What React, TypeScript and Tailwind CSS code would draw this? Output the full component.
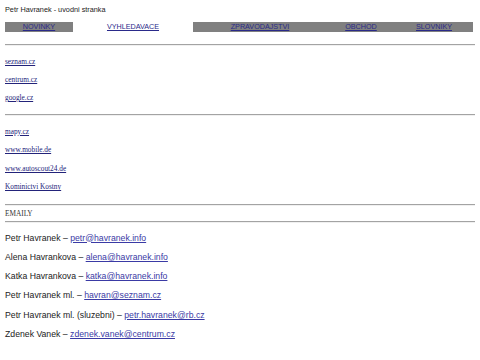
const navItems = [
  { label: "NOVINKY", w: "w-[68px]", active: false },
  { label: "VYHLEDAVACE", w: "w-[120px]", active: true },
  { label: "ZPRAVODAJSTVI", w: "w-[134px]", active: false },
  { label: "OBCHOD", w: "w-[68px]", active: false },
  { label: "SLOVNIKY", w: "w-[78px]", active: false },
];

const linksTop = ["seznam.cz", "centrum.cz", "google.cz"];
const linksBottom = ["mapy.cz", "www.mobile.de", "www.autoscout24.de", "Kominictvi Kostny"];

const emails = [
  { name: "Petr Havranek", mail: "petr@havranek.info" },
  { name: "Alena Havrankova", mail: "alena@havranek.info" },
  { name: "Katka Havrankova", mail: "katka@havranek.info" },
  { name: "Petr Havranek ml.", mail: "havran@seznam.cz" },
  { name: "Petr Havranek ml. (sluzebni)", mail: "petr.havranek@rb.cz" },
  { name: "Zdenek Vanek", mail: "zdenek.vanek@centrum.cz" },
];

function Rule() {
  return <div className="border-t border-t-[#a3a3a3] border-b border-b-[#f0f0f0]" />;
}

export default function App() {
  return (
    <div className="w-[480px] h-[360px] overflow-hidden bg-white px-[5px] text-[#222]">
      <div className="pt-[6px] text-[7.3px] leading-[8px] font-['Liberation_Sans',Arial,sans-serif]">
        Petr Havranek - uvodni stranka
      </div>

      <div className="mt-[8px] flex h-[10px] font-['Liberation_Sans',Arial,sans-serif] text-[7.2px] leading-[10px]">
        {navItems.map((n) => (
          <div
            key={n.label}
            className={`${n.w} text-center ${n.active ? "bg-white" : "bg-[#808080]"}`}
          >
            <a href="#" className="text-[#2a2a8a] underline">
              {n.label}
            </a>
          </div>
        ))}
      </div>

      <div className="mt-[12px]">
        <Rule />
      </div>

      <div className="mt-[7px] font-['Liberation_Serif','Times_New_Roman',serif] text-[7.3px]">
        {linksTop.map((l) => (
          <div key={l} className="h-[18px] leading-[18px]">
            <a href="#" className="text-[#23237a] underline">{l}</a>
          </div>
        ))}
      </div>

      <div className="mt-[7px]">
        <Rule />
      </div>

      <div className="mt-[7px] font-['Liberation_Serif','Times_New_Roman',serif] text-[7.3px]">
        {linksBottom.map((l) => (
          <div key={l} className="h-[18.4px] leading-[18.4px]">
            <a href="#" className="text-[#23237a] underline">{l}</a>
          </div>
        ))}
      </div>

      <div className="mt-[7px]">
        <Rule />
      </div>
      <div className="h-[15px] leading-[15px] font-['Liberation_Serif','Times_New_Roman',serif] text-[7.3px] text-[#333]">
        EMAILY
      </div>
      <Rule />

      <div className="mt-[6px] font-['Liberation_Sans',Arial,sans-serif] text-[8.7px]">
        {emails.map((e) => (
          <div key={e.mail} className="h-[19.3px] leading-[19.3px]">
            {e.name} –{" "}
            <a href="#" className="text-[#3a3aa5] underline">{e.mail}</a>
          </div>
        ))}
      </div>
    </div>
  );
}
